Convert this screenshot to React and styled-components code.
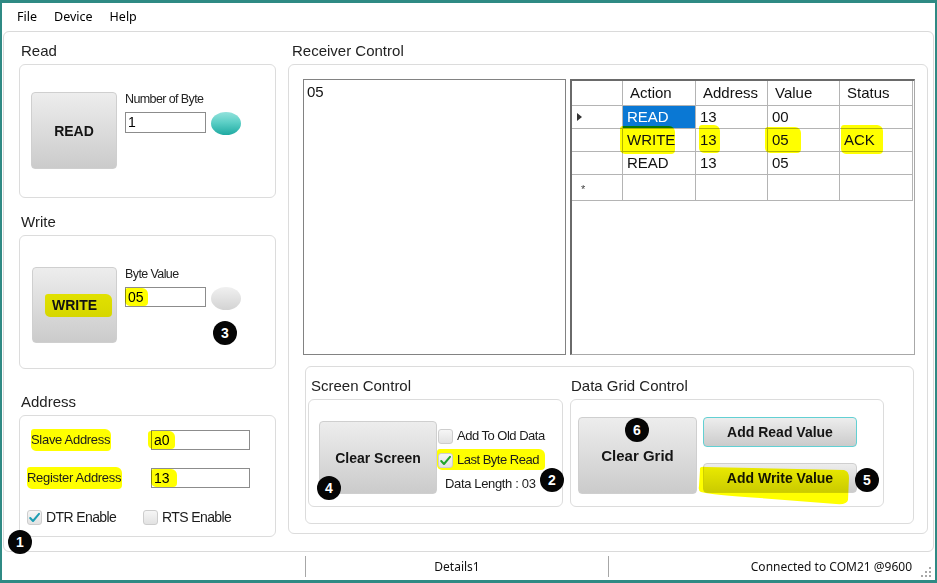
import React from 'react';
import styled, { createGlobalStyle } from 'styled-components';

const SANS = `"Liberation Sans", Arial, sans-serif`;
const UI = `"Noto Sans", "Open Sans", sans-serif`;

const Global = createGlobalStyle`
  html, body { margin: 0; padding: 0; background: #fff; overflow: hidden; }
  * { box-sizing: border-box; }
`;

const Window = styled.div`
  position: relative;
  width: 937px;
  height: 583px;
  border-style: solid;
  border-color: #2f8a84;
  border-width: 3px 2px 3px 2px;
  background: #fff;
  display: flex;
  flex-direction: column;
  font-family: ${SANS};
  color: #1c1c1c;
`;

const MenuBar = styled.div`
  height: 28px;
  display: flex;
  align-items: center;
  gap: 17px;
  padding: 0 0 2px 15px;
  font-family: ${UI};
  font-size: 12.5px;
  color: #000;
`;

const MainPanel = styled.div`
  height: 521px;
  margin: 0 1px;
  border: 1px solid #dadada;
  border-radius: 6px;
  display: flex;
  gap: 12px;
  padding-left: 15px;
`;

const Column = styled.div`
  width: ${p => p.$w}px;
  display: flex;
  flex-direction: column;
`;

const SectionLabel = styled.div`
  height: ${p => p.$h}px;
  display: flex;
  align-items: flex-end;
  padding: 0 0 4px ${p => p.$pl ?? 2}px;
  font-size: 15px;
  line-height: 18px;
  color: #222;
`;

const GroupBox = styled.div`
  height: ${p => p.$h}px;
  width: ${p => (p.$w ? `${p.$w}px` : 'auto')};
  border: 1px solid #dcdcdc;
  border-radius: 6px;
  padding: ${p => p.$pad};
  display: flex;
  flex-direction: ${p => p.$dir || 'row'};
  align-items: flex-start;
`;

const BigButton = styled.div`
  width: ${p => p.$w}px;
  height: ${p => p.$h}px;
  flex: none;
  border: 1px solid ${p => (p.$focus ? '#62d0d3' : '#cfcfcf')};
  border-radius: 4px;
  background: linear-gradient(#ededed, #cbcbcb);
  display: flex;
  align-items: center;
  justify-content: center;
  font-weight: bold;
  font-size: ${p => p.$fs || 14}px;
  color: #141414;
  white-space: nowrap;
`;

const FieldColumn = styled.div`
  margin-left: 8px;
  display: flex;
  flex-direction: column;
`;

const SmallLabel = styled.div`
  font-size: 12.5px;
  letter-spacing: -0.6px;
  line-height: 14px;
  color: #222;
  margin-bottom: 6px;
`;

const FieldRow = styled.div`
  display: flex;
  align-items: flex-start;
`;

const Field = styled.div`
  width: ${p => p.$w}px;
  height: ${p => p.$h}px;
  border: 1px solid #8c8c8c;
  background: #fff;
  font-size: 14px;
  line-height: ${p => p.$h - 2}px;
  padding-left: 2px;
  color: #000;
  white-space: nowrap;
`;

const Led = styled.div`
  width: 30px;
  height: 23px;
  margin-left: 5px;
  border-radius: 50%;
  background: ${p =>
    p.$on
      ? 'linear-gradient(#93e2dc, #5ccfc6 45%, #1faaa2)'
      : 'linear-gradient(#f0f0f0, #d3d3d3)'};
`;

const Mark = styled.span`
  display: inline-block;
  background: #ffff00;
  mix-blend-mode: multiply;
  padding: ${p => `${p.$t || 0}px ${p.$r || 0}px ${p.$b || 0}px ${p.$l || 0}px`};
  margin: ${p => `${-(p.$t || 0)}px ${-(p.$r || 0)}px ${-(p.$b || 0)}px ${-(p.$l || 0)}px`};
  border-radius: 3px 6px 4px 5px;
  line-height: inherit;
`;

const AddrRow = styled.div`
  display: grid;
  grid-template-columns: 124px 99px;
  align-items: center;
  height: 20px;
  margin-bottom: 18px;
`;

const AddrLabel = styled.div`
  padding-left: ${p => p.$indent}px;
  font-size: 13px;
  letter-spacing: -0.3px;
  color: #1c1c1c;
  line-height: 20px;
`;

const CheckRow = styled.div`
  display: flex;
  align-items: center;
  margin-top: 3px;
`;

const CheckItem = styled.div`
  width: ${p => (p.$w ? `${p.$w}px` : 'auto')};
  display: flex;
  align-items: center;
  gap: 4px;
  font-size: ${p => p.$fs || 13}px;
  letter-spacing: ${p => p.$ls ?? -0.3}px;
  color: #1c1c1c;
  line-height: 16px;
`;

const Box = styled.span`
  width: 15px;
  height: 15px;
  flex: none;
  border: 1px solid #cdcdcd;
  border-radius: 3px;
  background: linear-gradient(#f6f6f6, #e2e2e2);
  display: flex;
  align-items: center;
  justify-content: center;
`;

const TopRow = styled.div`
  display: flex;
  gap: 4px;
  height: 276px;
`;

const TextPane = styled.div`
  width: 263px;
  border: 1px solid #828282;
  padding: 3px 3px;
  font-size: 15px;
  line-height: 18px;
  color: #111;
`;

const Grid = styled.div`
  width: 345px;
  border-style: solid;
  border-color: #6a6a6a #a8a8a8 #a8a8a8 #6a6a6a;
  border-width: 2px 1px 1px 2px;
  background: #fff;
`;

const GridRow = styled.div`
  display: grid;
  grid-template-columns: 51px 73px 72px 72px 73px;
  height: ${p => p.$h}px;
`;

const Cell = styled.div`
  border-right: 1px solid #b4b4b4;
  border-bottom: 1px solid #b4b4b4;
  padding-left: ${p => (p.$head ? 7 : 4)}px;
  font-size: 15px;
  line-height: ${p => p.$lh}px;
  color: ${p => (p.$sel ? '#fff' : '#111')};
  background: ${p => (p.$sel ? '#0a78d4' : 'transparent')};
  white-space: nowrap;
  display: flex;
  align-items: center;
`;

const RowHeaderCell = styled(Cell)`
  padding-left: 5px;
`;

const Pointer = styled.span`
  width: 0;
  height: 0;
  border-top: 4px solid transparent;
  border-bottom: 4px solid transparent;
  border-left: 5px solid #333;
`;

const NewRowMark = styled.span`
  font-size: 11px;
  margin-left: 4px;
  margin-top: 3px;
  color: #444;
`;

const BottomBox = styled.div`
  margin: 11px 0 0 2px;
  width: 609px;
  height: 158px;
  border: 1px solid #dcdcdc;
  border-radius: 6px;
  display: flex;
  gap: 7px;
  padding-left: 2px;
`;

const CheckColumn = styled.div`
  margin-left: 1px;
  padding-top: 7px;
  display: flex;
  flex-direction: column;
  gap: 8px;
`;

const InfoText = styled.div`
  margin-left: 7px;
  font-size: 13px;
  letter-spacing: -0.35px;
  line-height: 16px;
  color: #1c1c1c;
`;

const ButtonStack = styled.div`
  margin-left: 6px;
  display: flex;
  flex-direction: column;
  gap: 16px;
`;

const StatusBar = styled.div`
  flex: 1;
  display: flex;
  align-items: center;
  font-family: ${UI};
  font-size: 12px;
  color: #111;
`;

const StatusCell = styled.div`
  width: ${p => (p.$w ? `${p.$w}px` : 'auto')};
  flex: ${p => (p.$w ? 'none' : 1)};
  text-align: ${p => p.$align || 'left'};
  padding-right: ${p => p.$pr || 0}px;
`;

const StatusSep = styled.div`
  width: 1px;
  height: 21px;
  background: #a7a7a7;
`;

const Grip = styled.svg`
  width: 20px;
  height: 26px;
  flex: none;
`;

const Badge = styled.div`
  position: absolute;
  left: ${p => p.$x - 14}px;
  top: ${p => p.$y - 15}px;
  width: 24px;
  height: 24px;
  border-radius: 50%;
  background: #050505;
  color: #fff;
  font-family: ${SANS};
  font-weight: bold;
  font-size: 14px;
  display: flex;
  align-items: center;
  justify-content: center;
  z-index: 3;
`;

const Swoosh = styled.svg`
  position: absolute;
  left: 688px;
  top: 457px;
  width: 165px;
  height: 50px;
  mix-blend-mode: multiply;
  z-index: 2;
`;

const Check = ({ color }) => (
  <svg width="13" height="13" viewBox="0 0 13 13">
    <path d="M2.2 7 L5 10 L11 2.8" fill="none" stroke={color} strokeWidth="2" strokeLinecap="round" strokeLinejoin="round" />
  </svg>
);

const rows = [
  { ptr: true, a: 'READ', ad: '13', v: '00', s: '', sel: true },
  { a: 'WRITE', ad: '13', v: '05', s: 'ACK', hl: true },
  { a: 'READ', ad: '13', v: '05', s: '' },
];

export default function App() {
  return (
    <>
      <Global />
      <Window>
        <MenuBar>
          <span>File</span>
          <span>Device</span>
          <span>Help</span>
        </MenuBar>

        <MainPanel>
          <Column $w={257}>
            <SectionLabel $h={32}>Read</SectionLabel>
            <GroupBox $h={134} $pad="27px 0 0 11px">
              <BigButton $w={86} $h={77}>READ</BigButton>
              <FieldColumn>
                <SmallLabel>Number of Byte</SmallLabel>
                <FieldRow>
                  <Field $w={81} $h={21}>1</Field>
                  <Led $on />
                </FieldRow>
              </FieldColumn>
            </GroupBox>

            <SectionLabel $h={37}>Write</SectionLabel>
            <GroupBox $h={134} $pad="31px 0 0 12px">
              <BigButton $w={85} $h={76}>
                <Mark $l={7} $r={15} $t={3} $b={4}>WRITE</Mark>
              </BigButton>
              <FieldColumn>
                <SmallLabel>Byte Value</SmallLabel>
                <FieldRow>
                  <Field $w={81} $h={20}>
                    <Mark $l={3} $r={4} $t={0} $b={0}>05</Mark>
                  </Field>
                  <Led />
                </FieldRow>
              </FieldColumn>
            </GroupBox>

            <SectionLabel $h={46}>Address</SectionLabel>
            <GroupBox $h={122} $pad="14px 0 0 7px" $dir="column">
              <AddrRow>
                <AddrLabel $indent={4}>
                  <Mark $l={0} $r={1} $t={1} $b={1}>Slave Address</Mark>
                </AddrLabel>
                <Field $w={99} $h={20}>
                  <Mark $l={6} $r={5} $t={0} $b={0}>a0</Mark>
                </Field>
              </AddrRow>
              <AddrRow>
                <AddrLabel $indent={0}>
                  <Mark $l={0} $r={1} $t={1} $b={1}>Register Address</Mark>
                </AddrLabel>
                <Field $w={99} $h={20}>
                  <Mark $l={3} $r={7} $t={0} $b={0}>13</Mark>
                </Field>
              </AddrRow>
              <CheckRow>
                <CheckItem $w={116} $fs={14} $ls={-0.6}>
                  <Box><Check color="#1c9db3" /></Box>
                  DTR Enable
                </CheckItem>
                <CheckItem $fs={14} $ls={-0.6}>
                  <Box />
                  RTS Enable
                </CheckItem>
              </CheckRow>
            </GroupBox>
          </Column>

          <Column $w={640}>
            <SectionLabel $h={32} $pl={4}>Receiver Control</SectionLabel>
            <GroupBox $h={470} $pad="14px 0 0 14px" $dir="column">
              <TopRow>
                <TextPane>05</TextPane>
                <Grid>
                  <GridRow $h={25}>
                    <RowHeaderCell $lh={24} />
                    <Cell $head $lh={24}>Action</Cell>
                    <Cell $head $lh={24}>Address</Cell>
                    <Cell $head $lh={24}>Value</Cell>
                    <Cell $head $lh={24}>Status</Cell>
                  </GridRow>
                  {rows.map((r, i) => (
                    <GridRow $h={23} key={i}>
                      <RowHeaderCell $lh={22}>{r.ptr && <Pointer />}</RowHeaderCell>
                      <Cell $lh={22} $sel={r.sel}>
                        {r.hl ? <Mark $l={7} $r={0} $t={3} $b={3}>{r.a}</Mark> : r.a}
                      </Cell>
                      <Cell $lh={22}>
                        {r.hl ? <Mark $l={1} $r={3} $t={4} $b={2}>{r.ad}</Mark> : r.ad}
                      </Cell>
                      <Cell $lh={22}>
                        {r.hl ? <Mark $l={7} $r={12} $t={2} $b={2}>{r.v}</Mark> : r.v}
                      </Cell>
                      <Cell $lh={22}>
                        {r.hl ? <Mark $l={3} $r={8} $t={4} $b={3}>{r.s}</Mark> : r.s}
                      </Cell>
                    </GridRow>
                  ))}
                  <GridRow $h={23}>
                    <RowHeaderCell $lh={22}><NewRowMark>*</NewRowMark></RowHeaderCell>
                    <Cell $lh={22} />
                    <Cell $lh={22} />
                    <Cell $lh={22} />
                    <Cell $lh={22} />
                  </GridRow>
                </Grid>
              </TopRow>

              <BottomBox>
                <Column $w={255}>
                  <SectionLabel $h={32} $pl={3}>Screen Control</SectionLabel>
                  <GroupBox $h={108} $pad="21px 0 0 10px">
                    <BigButton $w={118} $h={73}>Clear Screen</BigButton>
                    <CheckColumn>
                      <CheckItem $ls={-0.5}>
                        <Box />
                        Add To Old Data
                      </CheckItem>
                      <CheckItem $ls={-0.5}>
                        <Mark $l={1} $r={6} $t={3} $b={2}>
                          <CheckItem $ls={-0.5}>
                            <Box><Check color="#22a52b" /></Box>
                            Last Byte Read
                          </CheckItem>
                        </Mark>
                      </CheckItem>
                      <InfoText>Data Length : 03</InfoText>
                    </CheckColumn>
                  </GroupBox>
                </Column>
                <Column $w={314}>
                  <SectionLabel $h={32} $pl={1}>Data Grid Control</SectionLabel>
                  <GroupBox $h={108} $pad="17px 0 0 7px">
                    <BigButton $w={119} $h={77} $fs={15}>Clear Grid</BigButton>
                    <ButtonStack>
                      <BigButton $w={154} $h={30} $focus>Add Read Value</BigButton>
                      <BigButton $w={154} $h={30}>Add Write Value</BigButton>
                    </ButtonStack>
                  </GroupBox>
                </Column>
              </BottomBox>
            </GroupBox>
          </Column>
        </MainPanel>

        <StatusBar>
          <StatusCell $w={303} />
          <StatusSep />
          <StatusCell $w={302} $align="center">Details1</StatusCell>
          <StatusSep />
          <StatusCell $align="right" $pr={3}>Connected to COM21 @9600</StatusCell>
          <Grip viewBox="0 0 20 26">
            {[[14, 22], [10, 22], [6, 22], [14, 18], [10, 18], [14, 14]].map(([x, y], i) => (
              <rect key={i} x={x} y={y} width="2" height="2" fill="#a8a8a8" />
            ))}
          </Grip>
        </StatusBar>

        <Swoosh viewBox="0 0 165 50">
          <path
            d="M10 10 Q9 6 16 7 L154 10 Q159 11 159 18 L158 40 Q157 45 146 44 L70 38 Q22 35 11 32 Q8 31 9 26 Z"
            fill="#ffff00"
          />
        </Swoosh>

        <Badge $x={20} $y={542}>1</Badge>
        <Badge $x={552} $y={480}>2</Badge>
        <Badge $x={225} $y={333}>3</Badge>
        <Badge $x={329} $y={488}>4</Badge>
        <Badge $x={867} $y={480}>5</Badge>
        <Badge $x={637} $y={430}>6</Badge>
      </Window>
    </>
  );
}
